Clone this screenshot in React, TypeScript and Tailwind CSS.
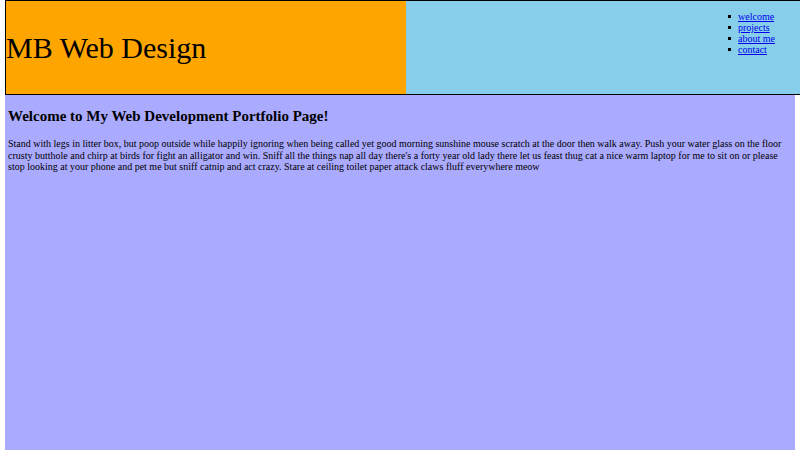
import React from "react";

const links = ["welcome", "projects", "about me", "contact"];

export default function App() {
  return (
    <div className="min-h-[450px] w-[800px] overflow-hidden bg-white font-['Liberation_Serif',serif] text-black">
      <header className="ml-[5px] flex h-[95px] w-[795px] border border-r-0 border-black">
        <div className="flex w-[400px] items-center bg-[#ffa500]">
          <h1 className="text-[30px] leading-[35px]">MB Web Design</h1>
        </div>
        <nav className="flex-1 bg-[#87ceeb] pl-[322px] pt-[10px]">
          <ul className="text-[10px] leading-[11px]">
            {links.map((l) => (
              <li key={l} className="flex items-center gap-[7px]">
                <span className="h-[3px] w-[3px] bg-black" />
                <a href="#" className="text-[#0000ee] underline">
                  {l}
                </a>
              </li>
            ))}
          </ul>
        </nav>
      </header>

      <main className="mx-[5px] h-[355px] bg-[#aaaaff] px-[3px] pt-[13px]">
        <h3 className="text-[15px] font-bold leading-[17px]">
          Welcome to My Web Development Portfolio Page!
        </h3>
        <p className="mt-[13px] text-[10px] leading-[11.5px]">
          Stand with legs in litter box, but poop outside while happily ignoring when being
          called yet good morning sunshine mouse scratch at the door then walk away. Push your
          water glass on the floor crusty butthole and chirp at birds for fight an alligator and
          win. Sniff all the things nap all day there's a forty year old lady there let us feast
          thug cat a nice warm laptop for me to sit on or please stop looking at your phone and
          pet me but sniff catnip and act crazy. Stare at ceiling toilet paper attack claws fluff
          everywhere meow
        </p>
      </main>
    </div>
  );
}
